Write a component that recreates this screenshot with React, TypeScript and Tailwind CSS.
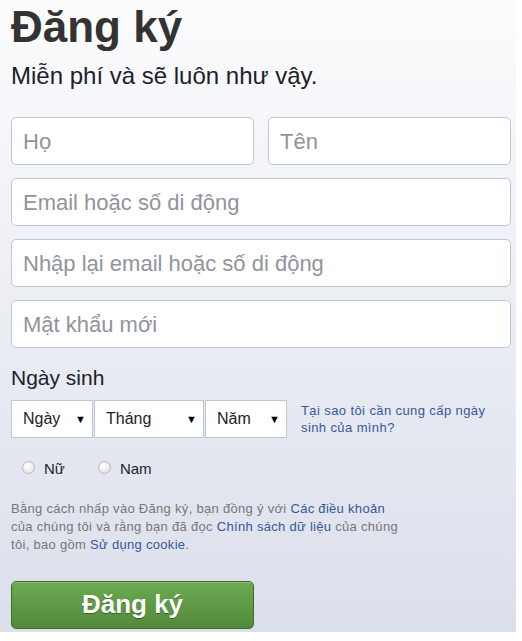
import type { ReactNode } from "react";

const FONT = "font-['Liberation_Sans',Arial,sans-serif]";

function Field({ placeholder, className = "" }: { placeholder: string; className?: string }) {
  return (
    <div
      className={`flex h-[48px] items-center rounded-[5px] border border-[#bdc7d8] bg-white px-[11px] text-[22px] text-[#90949c] ${className}`}
    >
      {placeholder}
    </div>
  );
}

function Drop({ label, width }: { label: string; width: string }) {
  return (
    <div
      className={`flex h-[38px] items-center justify-between border border-[#bdc7d8] bg-white pl-[11px] pr-[6px] text-[16px] text-[#1d2129] ${width}`}
    >
      <span>{label}</span>
      <span className="text-[11px] text-black">▼</span>
    </div>
  );
}

function Radio({ children }: { children: ReactNode }) {
  return (
    <label className="flex items-center gap-[9px] text-[15px] text-[#1d2129]">
      <span className="mb-[4px] inline-block h-[13px] w-[13px] rounded-full border border-[#b9b9b9] bg-[radial-gradient(circle_at_40%_35%,#ffffff,#dcdcdc)]" />
      {children}
    </label>
  );
}

function Link({ children }: { children: ReactNode }) {
  return <span className="text-[#365899]">{children}</span>;
}

export default function App() {
  return (
    <div className="min-h-screen bg-white">
      <div
        className={`${FONT} h-[632px] w-[516px] bg-gradient-to-b from-[#fcfcfd] to-[#dbdfeb] pl-[11px] pr-[5px]`}
      >
        <h1 className="pt-[5px] text-[44px] font-bold leading-[44px] text-[#333333]">Đăng ký</h1>
        <p className="mt-[13px] text-[24px] leading-[28px] text-[#1d2129]">Miễn phí và sẽ luôn như vậy.</p>

        <div className="mt-[27px] flex w-[500px] flex-col gap-[13px]">
          <div className="flex gap-[14px]">
            <Field placeholder="Họ" className="flex-1" />
            <Field placeholder="Tên" className="flex-1" />
          </div>
          <Field placeholder="Email hoặc số di động" />
          <Field placeholder="Nhập lại email hoặc số di động" />
          <Field placeholder="Mật khẩu mới" />
        </div>

        <div className="mt-[17px] text-[21px] leading-[26px] text-[#1d2129]">Ngày sinh</div>
        <div className="mt-[9px] flex items-start">
          <div className="flex gap-[1px]">
            <Drop label="Ngày" width="w-[82px]" />
            <Drop label="Tháng" width="w-[110px]" />
            <Drop label="Năm" width="w-[82px]" />
          </div>
          <div className="ml-[14px] mt-[2px] w-[200px] text-[13px] leading-[17px] tracking-[0.4px] text-[#365899]">
            Tại sao tôi cần cung cấp ngày sinh của mình?
          </div>
        </div>

        <div className="mt-[20px] flex gap-[33px] pl-[11px]">
          <Radio>Nữ</Radio>
          <Radio>Nam</Radio>
        </div>

        <p className="mt-[19px] w-[392px] text-[13px] leading-[18px] tracking-[0.3px] text-[#777777]">
          Bằng cách nhấp vào Đăng ký, bạn đồng ý với <Link>Các điều khoản</Link> của chúng tôi và rằng bạn đã đọc{" "}
          <Link>Chính sách dữ liệu</Link> của chúng tôi, bao gồm <Link>Sử dụng cookie</Link>.
        </p>

        <button className="mt-[27px] flex h-[48px] w-[243px] items-center justify-center rounded-[5px] border border-[#3b6e22] bg-gradient-to-b from-[#6cab52] to-[#52893a] text-[26px] font-bold text-white [text-shadow:0_1px_1px_rgba(0,0,0,0.35)] shadow-[inset_0_1px_0_rgba(255,255,255,0.25)]">
          Đăng ký
        </button>
      </div>
    </div>
  );
}
